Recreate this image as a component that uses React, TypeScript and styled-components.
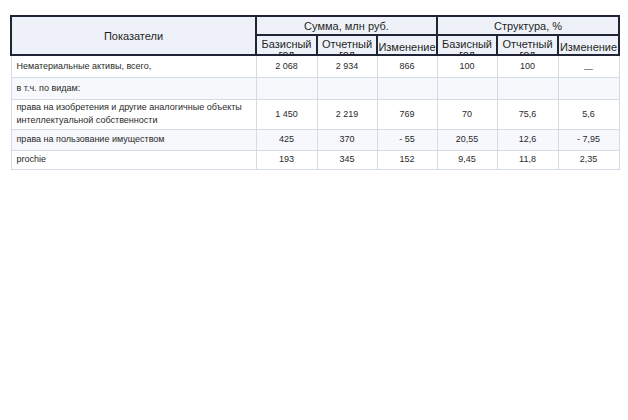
import React from "react";
import styled, { createGlobalStyle } from "styled-components";

const Global = createGlobalStyle`
  html, body { margin: 0; padding: 0; background: #ffffff; }
  body { font-family: "Liberation Sans", Arial, sans-serif; }
`;

const Page = styled.div`
  padding: 15px 10px 0 10px;
`;

const Table = styled.table`
  border-collapse: collapse;
  table-layout: fixed;
  width: 608px;
`;

const Col = styled.col<{ $w: number }>`
  width: ${(p) => p.$w}px;
`;

const HeadCell = styled.th<{ $h: number }>`
  border: 2px solid #1f2535;
  background: #eef2f8;
  color: #1f1f1f;
  font-weight: normal;
  font-size: 11px;
  text-align: center;
  padding: 0;
  height: ${(p) => p.$h}px;
  vertical-align: middle;
`;

const Clip = styled.div<{ $single?: boolean }>`
  height: 17px;
  overflow: hidden;
  line-height: 10px;
  padding-top: ${(p) => (p.$single ? 5 : 2)}px;
  box-sizing: border-box;
`;

const Row = styled.tr<{ $h: number; $alt?: boolean }>`
  height: ${(p) => p.$h}px;
  background: ${(p) => (p.$alt ? "#f6f8fb" : "#ffffff")};
`;

const Cell = styled.td<{ $left?: boolean }>`
  border: 1px solid #d3dbe7;
  font-size: 9px;
  color: #2a2a2a;
  padding: 0 5px;
  text-align: ${(p) => (p.$left ? "left" : "center")};
  line-height: 13px;
  vertical-align: middle;
`;

const Dash = styled.span`
  display: inline-block;
  transform: translateY(3px);
`;

const rows: { h: number; alt?: boolean; label: string; vals: string[] }[] = [
  { h: 22, label: "Нематериальные активы, всего,", vals: ["2 068", "2 934", "866", "100", "100", "—"] },
  { h: 22, alt: true, label: "в т.ч. по видам:", vals: ["", "", "", "", "", ""] },
  {
    h: 30,
    label: "права на изобретения и другие аналогичные объекты интеллектуальной собственности",
    vals: ["1 450", "2 219", "769", "70", "75,6", "5,6"],
  },
  { h: 21, alt: true, label: "права на пользование имуществом", vals: ["425", "370", "- 55", "20,55", "12,6", "- 7,95"] },
  { h: 19, label: "prochie", vals: ["193", "345", "152", "9,45", "11,8", "2,35"] },
];

const sub = ["Базисный год", "Отчетный год", "Изменение", "Базисный год", "Отчетный год", "Изменение"];
const widths = [245, 61, 60, 60, 60, 61, 61];

export default function App() {
  return (
    <>
      <Global />
      <Page>
        <Table>
          <colgroup>
            {widths.map((w, i) => (
              <Col key={i} $w={w} />
            ))}
          </colgroup>
          <thead>
            <tr>
              <HeadCell $h={17} rowSpan={2}>Показатели</HeadCell>
              <HeadCell $h={17} colSpan={3}>Сумма, млн руб.</HeadCell>
              <HeadCell $h={17} colSpan={3}>Структура, %</HeadCell>
            </tr>
            <tr>
              {sub.map((s, i) => (
                <HeadCell $h={18} key={i}>
                  <Clip $single={s === "Изменение"}>{s}</Clip>
                </HeadCell>
              ))}
            </tr>
          </thead>
          <tbody>
            {rows.map((r, i) => (
              <Row key={i} $h={r.h} $alt={r.alt}>
                <Cell $left>{r.label}</Cell>
                {r.vals.map((v, j) => (
                  <Cell key={j}>{v === "—" ? <Dash>{v}</Dash> : v}</Cell>
                ))}
              </Row>
            ))}
          </tbody>
        </Table>
      </Page>
    </>
  );
}
